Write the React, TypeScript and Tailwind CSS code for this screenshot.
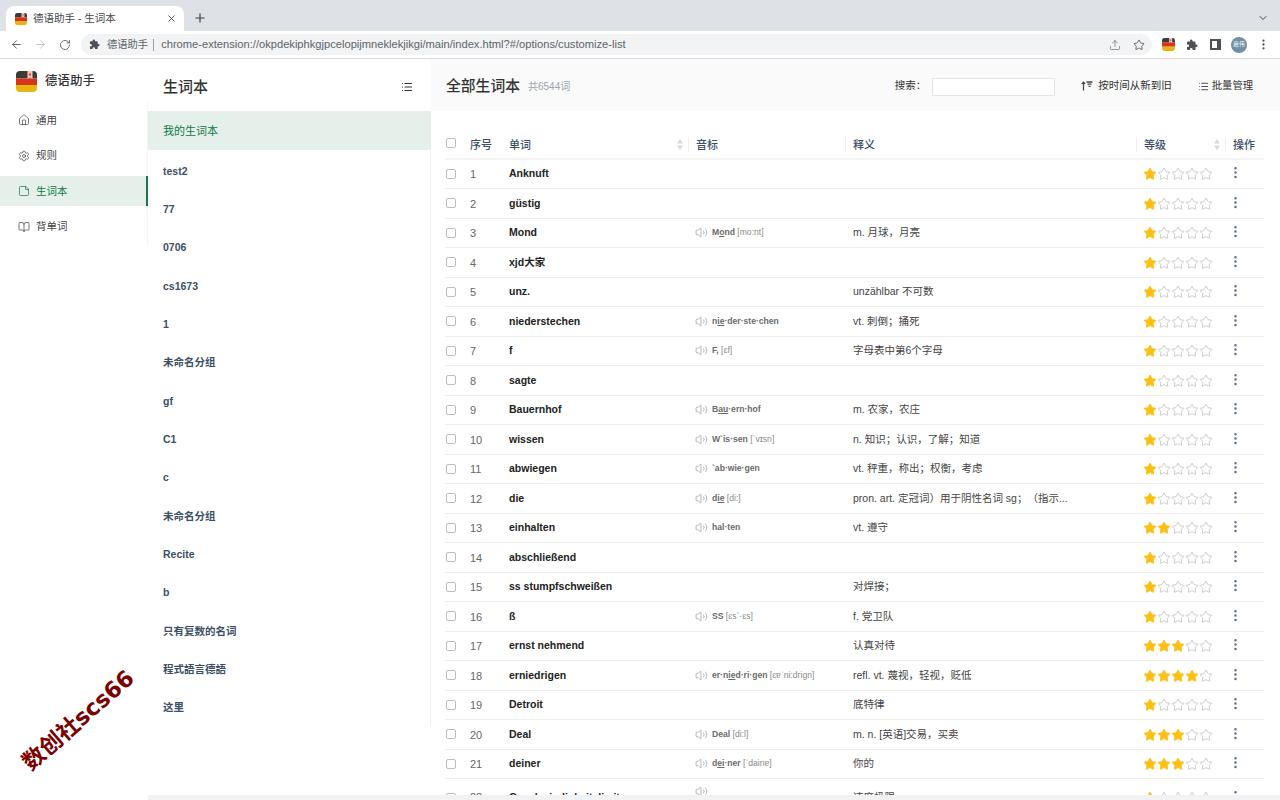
import React from 'react';
import {
  ArrowLeft, ArrowRight, BookOpen, ChevronDown, EllipsisVertical, House, List, Plus, RotateCw, Settings, Star, StickyNote, Upload, Volume2, X,
} from 'lucide-react';

const Logo: React.FC<{ size: number }> = ({ size }) => (
  <svg width={size} height={size} viewBox="0 0 21 21" className="shrink-0">
    <defs>
      <clipPath id={`logo-${size}`}>
        <rect x="0" y="0" width="21" height="21" rx="4" />
      </clipPath>
    </defs>
    <g clipPath={`url(#logo-${size})`}>
      <rect width="21" height="7.5" fill="#3d3a38" />
      <rect y="7.5" width="21" height="6.5" fill="#d8341a" />
      <rect y="14" width="21" height="7" fill="#e9b312" />
    </g>
    <path d="M11.5 0h5v8l-2.5-1.6L11.5 8z" fill="#f2c9c0" />
    <rect x="13" y="2.5" width="2" height="2" fill="#d8341a" />
  </svg>
);

const Puzzle: React.FC<{ size: number }> = ({ size }) => (
  <svg width={size} height={size} viewBox="0 0 24 24" fill="#4d5156" className="shrink-0">
    <path d="M20.5 11H19V7a2 2 0 0 0-2-2h-4V3.5a2.5 2.5 0 0 0-5 0V5H4a2 2 0 0 0-2 2v3.8h1.5a2.7 2.7 0 0 1 0 5.4H2V20a2 2 0 0 0 2 2h3.8v-1.5a2.7 2.7 0 0 1 5.4 0V22H17a2 2 0 0 0 2-2v-4h1.5a2.5 2.5 0 0 0 0-5z" />
  </svg>
);

const Checkbox = () => <span className="block w-[10px] h-[10px] rounded-[2px] border border-[#bdbdbd] bg-white" />;

const SortArrows = () => (
  <svg width="6" height="11" viewBox="0 0 6 11" fill="#d9d9d9" className="shrink-0">
    <path d="M3 0l3 4.5H0z" />
    <path d="M3 11L0 6.5h6z" />
  </svg>
);

const Stars: React.FC<{ count: number }> = ({ count }) => (
  <div className="flex items-center -ml-px pt-px">
    {[1, 2, 3, 4, 5].map(i => (
      <Star
        key={i}
        size={14}
        strokeWidth={1.5}
        className={i <= count ? 'text-[#fcc015] fill-[#fcc015]' : 'text-[#c4c4c4]'}
      />
    ))}
  </div>
);

const B: React.FC<{ children: React.ReactNode }> = ({ children }) => <span className="font-bold text-[#6b6b6b]">{children}</span>;
const U: React.FC<{ children: React.ReactNode }> = ({ children }) => <span className="underline">{children}</span>;
const Ipa: React.FC<{ children: React.ReactNode }> = ({ children }) => <span className="text-[#8a8a8a]"> {children}</span>;

interface Row {
  word: string;
  phon?: React.ReactNode;
  def?: string;
  stars: number;
}

const rows: Row[] = [
  { word: 'Anknuft', stars: 1 },
  { word: 'güstig', stars: 1 },
  { word: 'Mond', phon: <><B>M<U>o</U>nd</B><Ipa>[mo:nt]</Ipa></>, def: 'm. 月球，月亮', stars: 1 },
  { word: 'xjd大家', stars: 1 },
  { word: 'unz.', def: 'unzählbar 不可数', stars: 1 },
  { word: 'niederstechen', phon: <B>n<U>ie</U>·der·ste·chen</B>, def: 'vt. 刺倒；捅死', stars: 1 },
  { word: 'f', phon: <><B>F,</B><Ipa>[ɛf]</Ipa></>, def: '字母表中第6个字母', stars: 1 },
  { word: 'sagte', stars: 1 },
  { word: 'Bauernhof', phon: <B>B<U>au</U>·ern·hof</B>, def: 'm. 农家，农庄', stars: 1 },
  { word: 'wissen', phon: <><B>W`is·sen</B><Ipa>[ˈvɪsn]</Ipa></>, def: 'n. 知识；认识，了解；知道', stars: 1 },
  { word: 'abwiegen', phon: <B>`ab·wie·gen</B>, def: 'vt. 秤重，称出；权衡，考虑', stars: 1 },
  { word: 'die', phon: <><B>d<U>ie</U></B><Ipa>[di:]</Ipa></>, def: 'pron. art. 定冠词）用于阴性名词 sg；（指示...', stars: 1 },
  { word: 'einhalten', phon: <B>hal·ten</B>, def: 'vt. 遵守', stars: 2 },
  { word: 'abschließend', stars: 1 },
  { word: 'ss stumpfschweißen', def: '对焊接；', stars: 1 },
  { word: 'ß', phon: <><B>SS</B><Ipa>[ɛs`·ɛs]</Ipa></>, def: 'f. 党卫队', stars: 1 },
  { word: 'ernst nehmend', def: '认真对待', stars: 3 },
  { word: 'erniedrigen', phon: <><B>er·n<U>ie</U>d·ri·gen</B><Ipa>[ɛɐˈni:drign]</Ipa></>, def: 'refl. vt. 蔑视，轻视，贬低', stars: 4 },
  { word: 'Detroit', def: '底特律', stars: 1 },
  { word: 'Deal', phon: <><B>Deal</B><Ipa>[di:l]</Ipa></>, def: 'm. n. [英语]交易，买卖', stars: 3 },
  { word: 'deiner', phon: <><B>d<U>ei</U>·ner</B><Ipa>[ˈdainɐ]</Ipa></>, def: '你的', stars: 3 },
];

const lists = ['test2', '77', '0706', 'cs1673', '1', '未命名分组', 'gf', 'C1', 'c', '未命名分组', 'Recite', 'b', '只有复数的名词', '程式語言德語', '这里'];

const cols = 'grid grid-cols-[17px_39px_187px_157px_291px_89px_39px] items-center w-[819px]';

const Speaker = () => <Volume2 size={13} strokeWidth={1.2} className="text-[#8f8f8f] shrink-0" />;

const Dots = () => <EllipsisVertical size={15} strokeWidth={2} className="text-[#5f6f85] ml-px -mt-[2px]" />;

const NavItem: React.FC<{ icon: React.ReactNode; label: string; active?: boolean }> = ({ icon, label, active }) => (
  <div className={`flex items-center gap-[6px] h-[30px] pl-[18px] text-[10.5px] ${active ? 'bg-[#e6f0eb] text-[#0f7a45] border-r-2 border-[#0f7a45] -mr-px' : 'text-[#444]'}`}>
    {icon}
    <span className="pt-px">{label}</span>
  </div>
);

const App: React.FC = () => {
  return (
    <div className="relative w-[1280px] h-[800px] overflow-hidden bg-white font-['Liberation_Sans','Noto_Sans_CJK_SC',sans-serif]">
      {/* browser tab strip */}
      <div className="h-[31px] bg-[#dee1e6] flex items-end pl-[6px] pr-[11px]">
        <div className="w-[178px] h-[25px] bg-white rounded-t-lg flex items-center pl-[9px] pr-[7px]">
          <Logo size={12} />
          <span className="ml-[6px] text-[10.5px] text-[#45484d] flex-1">德语助手 - 生词本</span>
          <X size={11} strokeWidth={2} className="text-[#45484d]" />
        </div>
        <Plus size={14} strokeWidth={2} className="text-[#3c4043] ml-[9px] mb-[6px]" />
        <ChevronDown size={12} strokeWidth={2} className="text-[#45484d] ml-auto mb-[7px]" />
      </div>

      {/* toolbar */}
      <div className="h-[28px] bg-white border-b border-[#dadce0] flex items-center pl-[10px] pr-[10px]">
        <ArrowLeft size={13} strokeWidth={1.8} className="text-[#5f6368]" />
        <ArrowRight size={13} strokeWidth={1.8} className="text-[#bfc2c6] ml-[11px]" />
        <RotateCw size={12} strokeWidth={1.8} className="text-[#5f6368] ml-[12px]" />
        <div className="ml-[10px] w-[1072px] h-[21px] rounded-full bg-[#f1f3f4] flex items-center pl-[8px] pr-[7px]">
          <Puzzle size={11} />
          <span className="ml-[7px] text-[10.3px] text-[#5f6368]">德语助手</span>
          <span className="ml-[5px] mr-[7px] w-px h-[12px] bg-[#9aa0a6]" />
          <span className="text-[11.15px] text-[#5f6368] flex-1">chrome-extension://okpdekiphkgjpcelopijmneklekjikgi/main/index.html?#/options/customize-list</span>
          <Upload size={12} strokeWidth={1.3} className="text-[#5f6368]" />
          <Star size={12} strokeWidth={1.6} className="text-[#45484d] ml-[12px]" />
        </div>
        <div className="ml-[10px]"><Logo size={13} /></div>
        <div className="ml-[11px]"><Puzzle size={12} /></div>
        <span className="ml-[12px] block w-[11px] h-[11px] border-2 border-r-[4px] border-[#4d5156]" />
        <span className="ml-[10px] w-[16px] h-[16px] rounded-full bg-[#6f8fa3] text-white text-[6px] flex items-center justify-center">嘉伟</span>
        <EllipsisVertical size={13} strokeWidth={2.2} className="text-[#4d5156] ml-[10px]" />
      </div>

      <div className="flex h-[741px]">
        {/* main nav */}
        <aside className="w-[148px] shrink-0">
          <div className="h-[43px] flex items-center pl-[16px] pt-[1px] gap-[8px]">
            <Logo size={21} />
            <span className="text-[12.3px] font-medium tracking-[0.3px] text-[#333] pt-px">德语助手</span>
          </div>
          <nav className="flex flex-col gap-[5.5px] border-r border-[#f5f5f5] py-[3px]">
            <NavItem icon={<House size={12} strokeWidth={1.4} />} label="通用" />
            <NavItem icon={<Settings size={12} strokeWidth={1.4} />} label="规则" />
            <NavItem icon={<StickyNote size={12} strokeWidth={1.4} />} label="生词本" active />
            <NavItem icon={<BookOpen size={12} strokeWidth={1.4} />} label="背单词" />
          </nav>
        </aside>

        <div className="flex-1 min-w-0 flex flex-col">
          <div className="flex-1 min-h-0 flex">
            {/* word lists */}
            <section className="w-[283px] shrink-0">
              <div className="h-[52px] flex items-center justify-between pl-[15px] pr-[18px] pt-[4px]">
                <span className="text-[15px] text-[#333] font-medium">生词本</span>
                <List size={12} strokeWidth={2.4} className="text-[#333]" />
              </div>
              <div className="h-[616px] border-r border-[#f0f0f0]">
                <div className="h-[39px] -mr-px pl-[15px] pt-[2px] flex items-center bg-[#e6f0eb] text-[11px] text-[#0f7a45]">我的生词本</div>
                <div className="pt-[1.5px]">
                  {lists.map((name, i) => (
                    <div key={i} className="h-[38.33px] pl-[15px] pt-[2px] flex items-center text-[10.5px] font-bold text-[#3c4f66]">{name}</div>
                  ))}
                </div>
              </div>
            </section>

            {/* table */}
            <section className="flex-1 min-w-0 overflow-hidden">
              <div className="h-[52px] bg-[#fafafa] flex items-center pl-[15px] pr-[27px] pt-[2px]">
                <span className="text-[14.8px] font-medium text-[#333]">全部生词本</span>
                <span className="ml-[8px] text-[10px] text-[#9aa5b1]">共6544词</span>
                <span className="ml-auto text-[10.5px] text-[#333]">搜索：</span>
                <input className="ml-[6px] mt-px w-[123px] h-[18px] bg-white border border-[#e4e6e9] outline-none" />
                <svg width="12" height="10" viewBox="0 0 12 10" fill="none" stroke="#444" className="ml-[26px]">
                  <path d="M2.5 9.5V1M.8 2.8 2.5 1l1.7 1.8" strokeWidth="1.2" />
                  <path d="M5.5 1h6M6.5 3.2h4M7.5 5.4h2" strokeWidth="1.3" />
                </svg>
                <span className="ml-[5px] text-[10.5px] text-[#333]">按时间从新到旧</span>
                <List size={11} strokeWidth={2} className="text-[#444] ml-[26px]" />
                <span className="ml-[3px] text-[10.3px] text-[#333]">批量管理</span>
              </div>

              <div className="pl-[14px] pt-[20px]">
                <div className={`${cols} h-[28.5px] border-b-2 border-[#f3f3f3] text-[11px] font-medium text-[#3c4f66]`}>
                  <div className="pl-px -mt-[2px]"><Checkbox /></div>
                  <div className="pl-2 pt-px">序号</div>
                  <div className="pl-2 pt-px flex items-center justify-between pr-[5px]">单词<SortArrows /></div>
                  <div className="pl-[7px] pt-px border-l border-[#eee] h-[15px] flex items-center">音标</div>
                  <div className="pl-[7px] pt-px border-l border-[#eee] h-[15px] flex items-center">释义</div>
                  <div className="pl-[7px] pt-px border-l border-[#eee] h-[15px] flex items-center justify-between pr-[5px]">等级<SortArrows /></div>
                  <div className="pl-[7px] pt-px border-l border-[#eee] h-[15px] flex items-center">操作</div>
                </div>

                {rows.map((r, i) => (
                  <div key={i} className={`${cols} h-[29.5px] border-b border-[#eeeeee]`}>
                    <div className="pl-px"><Checkbox /></div>
                    <div className="pl-2 pt-px text-[11px] text-[#666]">{i + 1}</div>
                    <div className="pl-2 pt-px text-[10.5px] font-bold text-[#222]">{r.word}</div>
                    <div className="pl-[7px] flex items-center gap-[4px] text-[8.6px]">
                      {r.phon && <Speaker />}
                      <span>{r.phon}</span>
                    </div>
                    <div className="pl-2 pt-px text-[10.5px] text-[#444] whitespace-nowrap [text-spacing-trim:space-all]">{r.def}</div>
                    <div className="pl-2"><Stars count={r.stars} /></div>
                    <div className="pl-[2px]"><Dots /></div>
                  </div>
                ))}

                {/* last row is cut off by the page bottom */}
                <div className={`${cols} h-[37px]`}>
                  <div className="pl-px"><Checkbox /></div>
                  <div className="pl-2 text-[11px] text-[#666]">22</div>
                  <div className="pl-2 text-[10.5px] font-bold text-[#222]">Geschwindigkeitslimit</div>
                  <div className="pl-[7px] self-start pt-[6px]"><Speaker /></div>
                  <div className="pl-2 text-[10.5px] text-[#444]">速度极限</div>
                  <div className="pl-2"><Stars count={1} /></div>
                  <div className="pl-[2px]"><Dots /></div>
                </div>
              </div>
            </section>
          </div>
          <div className="h-[5px] bg-[#f1f2f4] shrink-0" />
        </div>
      </div>

      {/* watermark */}
      <div className="absolute left-[0px] top-[705px] w-[156px] text-center rotate-[-41deg] text-[22.5px] leading-[30px] font-bold whitespace-nowrap text-[#7b0000] font-['DejaVu_Sans','Noto_Sans_CJK_SC',sans-serif] pointer-events-none">
        数创社scs66
      </div>
    </div>
  );
};

export default App;
